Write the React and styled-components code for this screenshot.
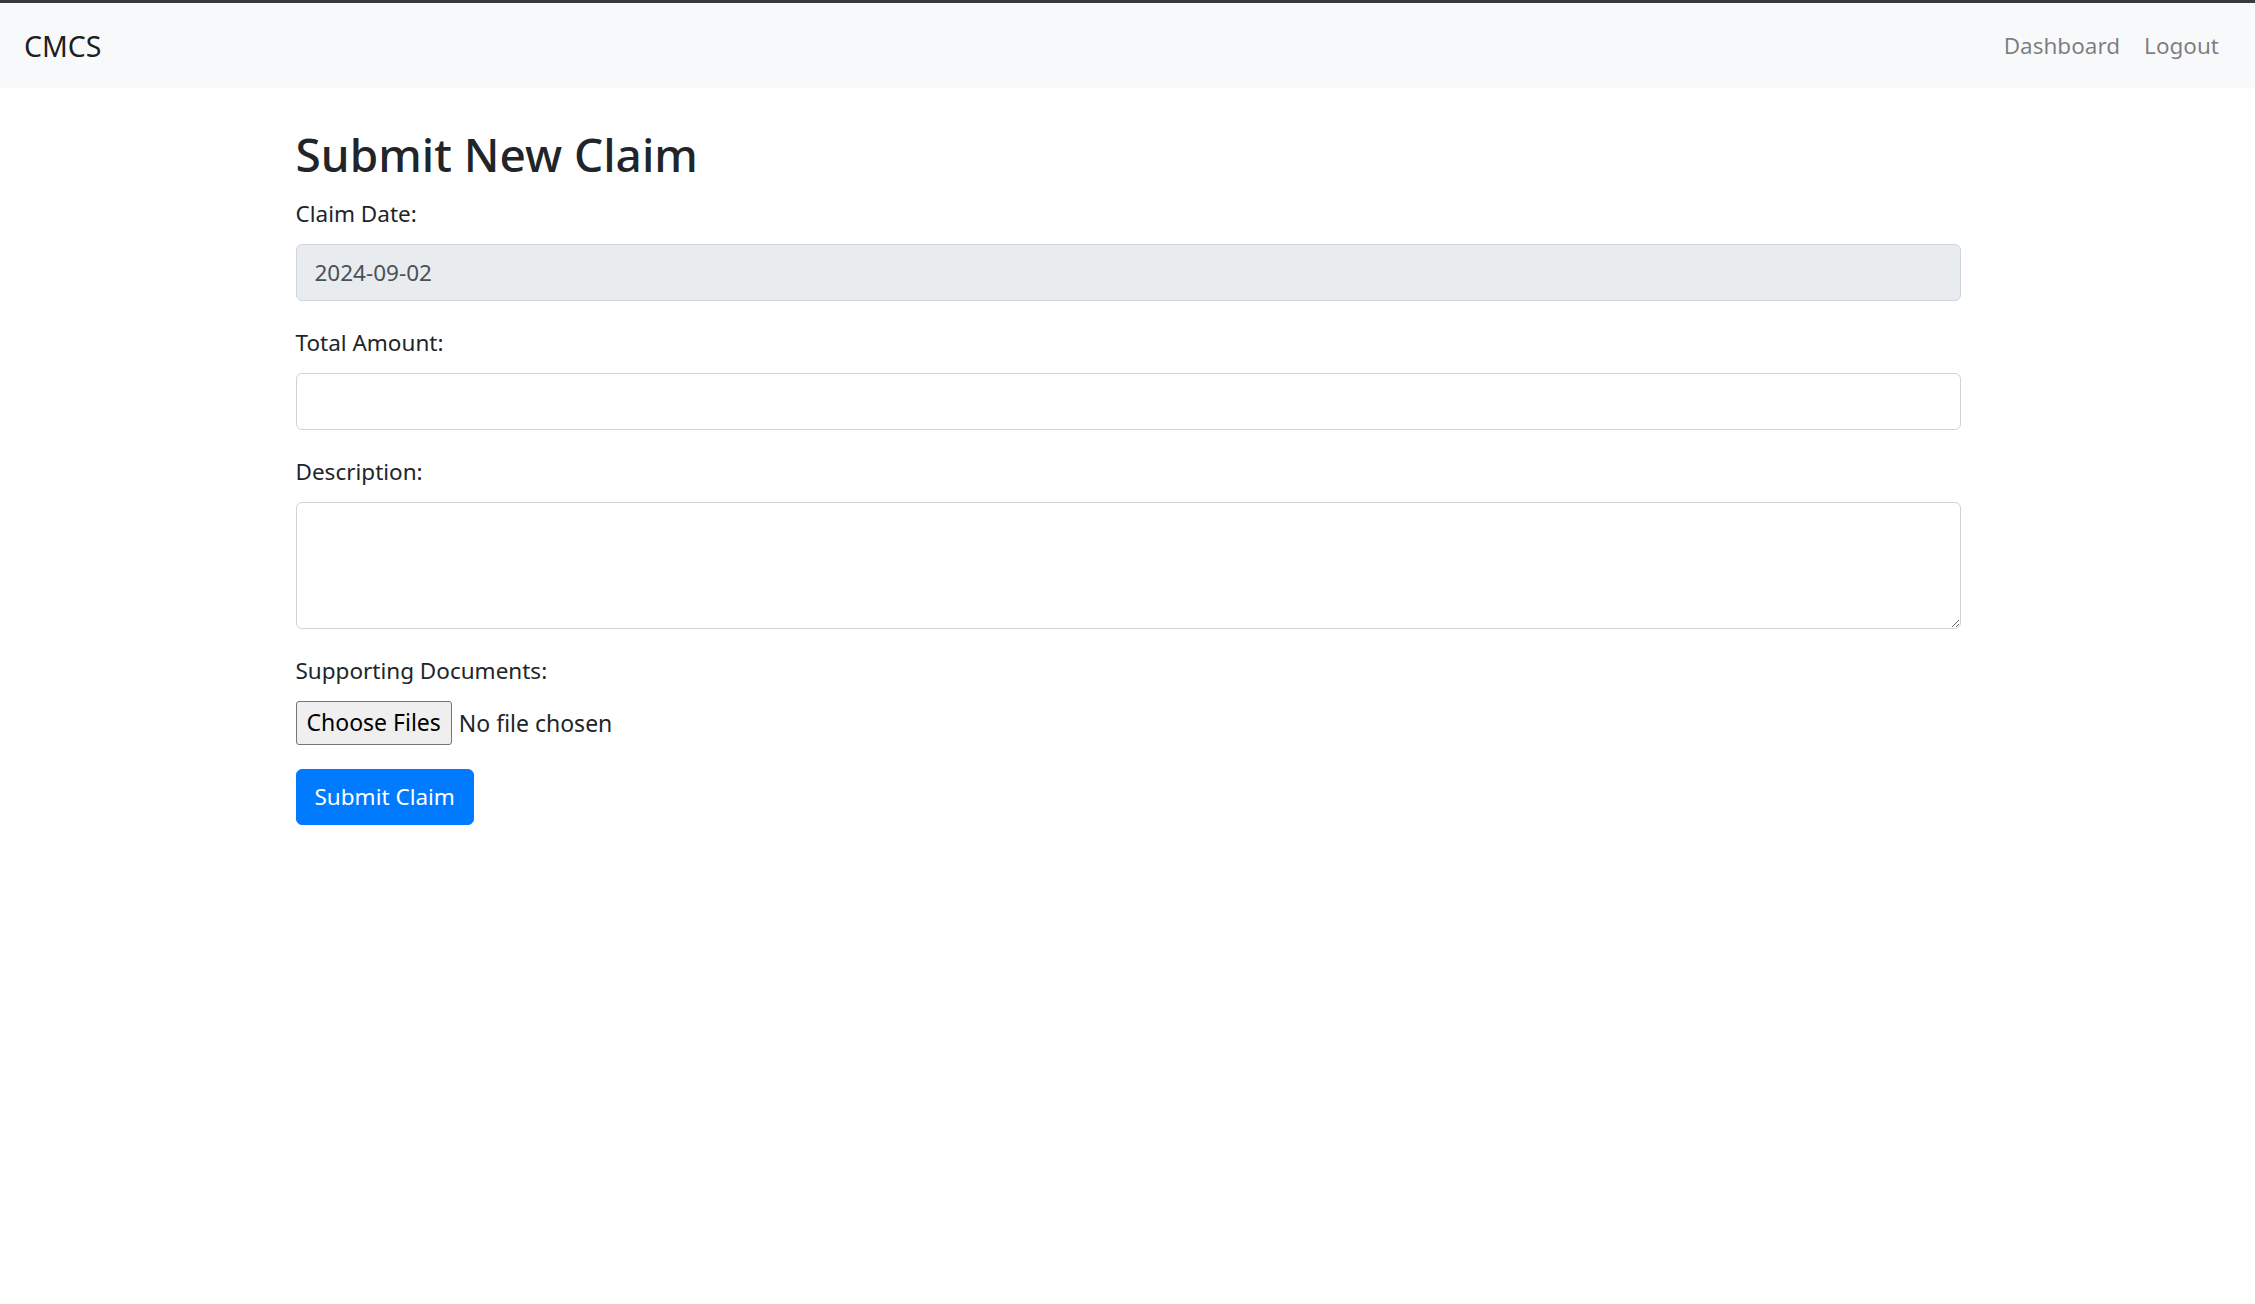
import styled, { createGlobalStyle } from 'styled-components';

const GlobalStyle = createGlobalStyle`
    body {
        margin: 0;
        font-family: "Noto Sans", "Open Sans", sans-serif;
        font-size: 22.5px;
        line-height: 1.5;
        color: #212529;
        background: #fff;
    }
    * {
        box-sizing: border-box;
    }
`;

const Navbar = styled.nav`
    display: flex;
    align-items: center;
    justify-content: space-between;
    background: #f8f9fa;
    border-top: 3px solid #3b3b3b;
    padding: 12px 24px;
    height: 88px;
`;

const Brand = styled.a`
    font-size: 28.5px;
    line-height: 45px;
    color: rgba(0, 0, 0, 0.9);
    text-decoration: none;
    padding: 8px 0 6px;
`;

const NavLinks = styled.div`
    display: flex;
`;

const NavLink = styled.a`
    padding: 12px;
    color: rgba(0, 0, 0, 0.5);
    text-decoration: none;
`;

const Container = styled.main`
    width: 1710px;
    margin: 36px auto 0;
    padding: 0 22px 0 23px;
`;

const Heading = styled.h2`
    font-size: 46px;
    font-weight: 500;
    line-height: 57.6px;
    margin: 0 0 12px;
    padding-top: 2px;
`;

const Group = styled.div`
    margin-bottom: 24px;
`;

const Label = styled.label`
    display: block;
    line-height: 36px;
    margin-bottom: 12px;
`;

const Input = styled.input`
    display: block;
    width: 100%;
    height: 57px;
    padding: 9px 18px;
    font: inherit;
    color: #495057;
    background: ${(p) => (p.readOnly ? '#e9ecef' : '#fff')};
    border: 1.5px solid #ced4da;
    border-radius: 6px;
    outline: none;
`;

const TextArea = styled.textarea`
    display: block;
    width: 100%;
    height: 127px;
    padding: 9px 18px;
    font: inherit;
    color: #495057;
    border: 1.5px solid #ced4da;
    border-radius: 6px;
    outline: none;
`;

const FileInput = styled.input`
    display: block;
    font: inherit;
    font-size: 23px;
    color: #212529;
    height: 44px;
    &::file-selector-button {
        font: inherit;
        height: 44px;
        margin-right: 7px;
        padding: 0 10px;
        color: #000;
        background: #efefef;
        border: 1.5px solid #767676;
        border-radius: 3px;
    }
`;

const SubmitButton = styled.button`
    font: inherit;
    color: #fff;
    background: #007bff;
    border: 1.5px solid #007bff;
    border-radius: 6px;
    padding: 9px 18px;
    line-height: 36px;
`;

export default function App() {
    return (
        <>
            <GlobalStyle />
            <Navbar>
                <Brand href="#">CMCS</Brand>
                <NavLinks>
                    <NavLink href="#">Dashboard</NavLink>
                    <NavLink href="#">Logout</NavLink>
                </NavLinks>
            </Navbar>
            <Container>
                <Heading>Submit New Claim</Heading>
                <form onSubmit={(e) => e.preventDefault()}>
                    <Group>
                        <Label htmlFor="claimDate">Claim Date:</Label>
                        <Input id="claimDate" type="text" value="2024-09-02" readOnly />
                    </Group>
                    <Group>
                        <Label htmlFor="totalAmount">Total Amount:</Label>
                        <Input id="totalAmount" type="text" />
                    </Group>
                    <Group>
                        <Label htmlFor="description">Description:</Label>
                        <TextArea id="description" rows={3} />
                    </Group>
                    <Group>
                        <Label htmlFor="docs">Supporting Documents:</Label>
                        <FileInput id="docs" type="file" multiple />
                    </Group>
                    <SubmitButton type="submit">Submit Claim</SubmitButton>
                </form>
            </Container>
        </>
    );
}
